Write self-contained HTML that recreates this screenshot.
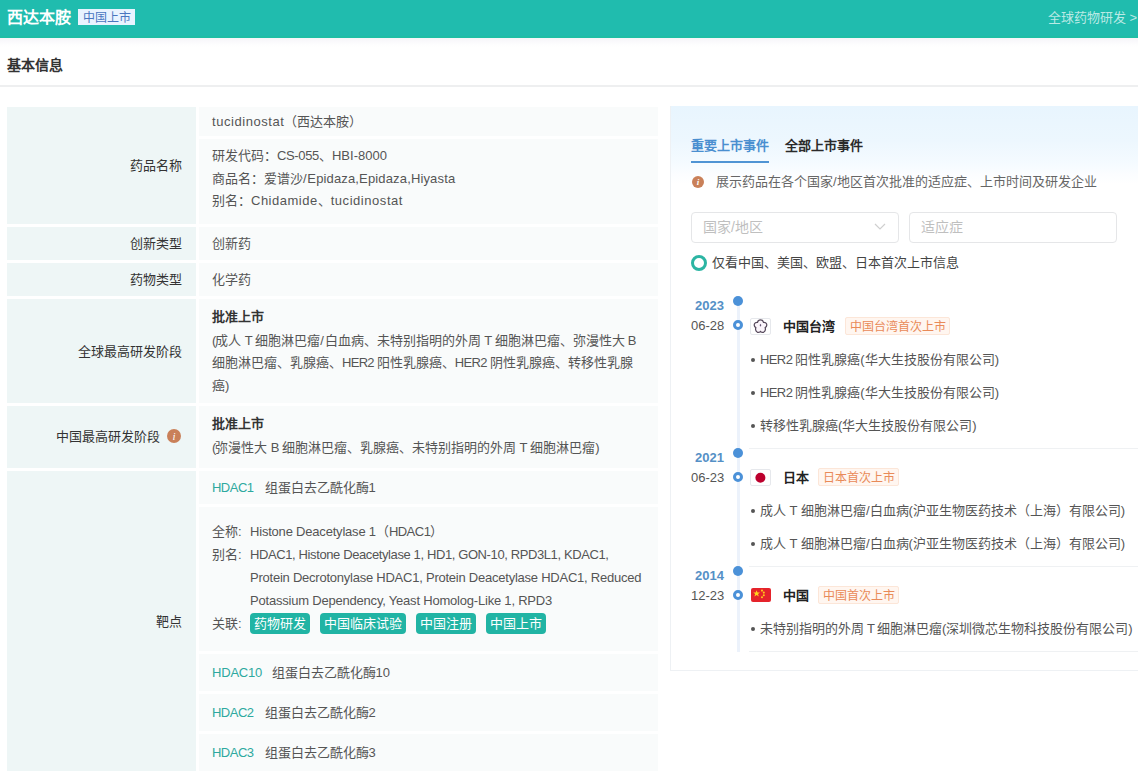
<!DOCTYPE html>
<html lang="zh-CN"><head><meta charset="utf-8">
<style>
html,body{margin:0;padding:0;}
body{width:1138px;height:771px;overflow:hidden;position:relative;background:#fff;font-family:"Liberation Sans",sans-serif;color:#555;}
.a{position:absolute;}
.t{position:absolute;white-space:nowrap;}
#hdr{left:0;top:0;width:1138px;height:38px;background:#20bcae;}
#shadow{left:0;top:38px;width:1138px;height:9px;background:linear-gradient(#f6f5f9,#fdfdfe 70%,#fff);}
.lab{position:absolute;left:7px;width:189px;background:#eef6f6;}
.val{position:absolute;left:199px;width:459px;background:#f9fbfb;}
.lt{position:absolute;right:14px;white-space:nowrap;font-size:13px;color:#333;line-height:20px;}
.vt{position:absolute;left:13px;white-space:nowrap;font-size:13px;color:#555;line-height:20px;}
.b{font-weight:bold;color:#333;}
.teal{color:#2ea99f;}
.tag{position:absolute;height:21px;line-height:21px;border-radius:4px;background:#21b4a4;color:#fff;font-size:13px;text-align:center;}
#panel{left:670px;top:106px;width:468px;height:564px;border-left:1px solid #eef1f4;border-bottom:1px solid #eef1f4;background:linear-gradient(#e8f5fe 0px,#edf7fe 35px,#f5fbff 58px,#fbfdff 68px,#fff 78px);}
.p{position:absolute;white-space:nowrap;font-size:13px;line-height:20px;}
.yr{font-weight:bold;color:#5590c6;}
.dt{color:#555;}
.dot{position:absolute;left:733px;width:10px;height:10px;border-radius:50%;background:#4b91d8;}
.ring{position:absolute;left:733px;width:4px;height:4px;border-radius:50%;border:3px solid #4b91d8;background:#fff;}
.flag{position:absolute;left:750px;width:19px;height:15px;border:1px solid #e6e8ec;border-radius:2px;background:#fff;}
.ctry{font-weight:bold;color:#222;}
.otag{position:absolute;height:16px;line-height:19px;border:1px solid #fce6d8;background:#fff6f0;color:#e98a58;font-size:12px;text-align:center;border-radius:2px;}
.li{color:#555;}
.li:before{content:"";position:absolute;left:-9px;top:8px;width:4px;height:4px;border-radius:50%;background:#555;}
.sep{position:absolute;left:749px;width:389px;height:1px;background:#eff1f3;}
</style></head><body>

<div class="a" id="hdr"></div>
<div class="a" id="shadow"></div>
<div class="a" style="left:0;top:36px;width:1138px;height:2px;background:#1ebea5;"></div>
<div class="t" style="left:7px;top:8px;font-size:16px;line-height:20px;font-weight:bold;color:#fff;">西达本胺</div>
<div class="a" style="left:78px;top:9px;width:57px;height:16px;background:#e9f3ff;"></div>
<div class="t" style="left:78px;top:10px;width:57px;text-align:center;font-size:12px;line-height:16px;color:#4a76bf;">中国上市</div>
<div class="t" style="right:1px;top:8px;font-size:13px;line-height:20px;color:rgba(255,255,255,0.7);">全球药物研发 &gt;</div>

<div class="t" style="left:7px;top:55px;font-size:14px;line-height:20px;font-weight:bold;color:#333;">基本信息</div>
<div class="a" style="left:0;top:85px;width:1138px;height:2px;background:#eeeff0;"></div>

<!-- labels -->
<div class="lab" style="top:107px;height:117px;"><div class="lt" style="top:49px;">药品名称</div></div>
<div class="lab" style="top:227px;height:33px;"><div class="lt" style="top:7px;">创新类型</div></div>
<div class="lab" style="top:263px;height:33px;"><div class="lt" style="top:7px;">药物类型</div></div>
<div class="lab" style="top:299px;height:104px;"><div class="lt" style="top:43px;">全球最高研发阶段</div></div>
<div class="lab" style="top:406px;height:62px;"><div class="lt" style="top:21px;right:36px;">中国最高研发阶段</div>
  <div class="a" style="right:15px;top:23px;width:14px;height:14px;border-radius:50%;background:#c98059;color:#fff;font-size:11px;line-height:14px;text-align:center;font-style:italic;font-family:'Liberation Serif',serif;">i</div></div>
<div class="lab" style="top:471px;height:300px;"><div class="lt" style="top:141px;">靶点</div></div>

<!-- values -->
<div class="val" style="top:107px;height:29px;"><div class="vt" style="top:5px;"><span style="letter-spacing:.55px">tucidinostat</span>（西达本胺）</div></div>
<div class="val" style="top:139px;height:85px;">
  <div class="vt" style="top:7px;">研发代码：<span style="letter-spacing:-.35px">CS-055</span>、HBI-8000</div>
  <div class="vt" style="top:30px;">商品名：爱谱沙<span style="letter-spacing:.7px">/</span><span style="letter-spacing:.15px">Epidaza,Epidaza,Hiyasta</span></div>
  <div class="vt" style="top:52px;">别名：<span style="letter-spacing:.5px">Chidamide</span>、<span style="letter-spacing:.55px">tucidinostat</span></div>
</div>
<div class="val" style="top:227px;height:33px;"><div class="vt" style="top:7px;">创新药</div></div>
<div class="val" style="top:263px;height:33px;"><div class="vt" style="top:7px;">化学药</div></div>
<div class="val" style="top:299px;height:104px;">
  <div class="vt b" style="top:8px;">批准上市</div>
  <div class="vt" style="top:32px;"><span style="letter-spacing:-1px">(</span>成人<span style="letter-spacing:-.33px"> T </span>细胞淋巴瘤<span style="letter-spacing:1px">/</span>白血病、未特别指明的外周<span style="letter-spacing:-.33px"> T </span>细胞淋巴瘤、弥漫性大<span style="letter-spacing:-.8px"> B</span></div>
  <div class="vt" style="top:54px;">细胞淋巴瘤、乳腺癌、<span style="letter-spacing:-.7px">HER2 </span>阳性乳腺癌、<span style="letter-spacing:-.7px">HER2 </span>阴性乳腺癌、转移性乳腺</div>
  <div class="vt" style="top:77px;">癌)</div>
</div>
<div class="val" style="top:406px;height:62px;">
  <div class="vt b" style="top:8px;">批准上市</div>
  <div class="vt" style="top:32px;"><span style="letter-spacing:-1px">(</span>弥漫性大<span style="letter-spacing:-.33px"> B </span>细胞淋巴瘤、乳腺癌、未特别指明的外周<span style="letter-spacing:-.33px"> T </span>细胞淋巴瘤)</div>
</div>
<div class="val" style="top:471px;height:33px;"><div class="vt teal" style="top:7px;letter-spacing:-.52px;">HDAC1</div><div class="vt" style="top:7px;left:65.5px;">组蛋白去乙酰化酶1</div></div>
<div class="val" style="top:507px;height:144px;">
  <div class="vt" style="top:15px;">全称:</div><div class="vt" style="top:15px;left:51px;"><span style="letter-spacing:-.2px">Histone Deacetylase 1</span>（<span style="letter-spacing:-.52px">HDAC1</span>）</div>
  <div class="vt" style="top:38px;">别名:</div><div class="vt" style="top:38px;left:51px;letter-spacing:-.39px;">HDAC1, Histone Deacetylase 1, HD1, GON-10, RPD3L1, KDAC1,</div>
  <div class="vt" style="top:61px;left:51px;letter-spacing:-.236px;">Protein Decrotonylase HDAC1, Protein Deacetylase HDAC1, Reduced</div>
  <div class="vt" style="top:84px;left:51px;letter-spacing:-.206px;">Potassium Dependency, Yeast Homolog-Like 1, RPD3</div>
  <div class="vt" style="top:107px;">关联:</div>
  <div class="tag" style="left:51px;top:106px;width:60px;">药物研发</div>
  <div class="tag" style="left:121px;top:106px;width:86px;">中国临床试验</div>
  <div class="tag" style="left:217px;top:106px;width:60px;">中国注册</div>
  <div class="tag" style="left:287px;top:106px;width:60px;">中国上市</div>
</div>
<div class="val" style="top:654px;height:37px;"><div class="vt teal" style="top:9px;letter-spacing:-.2px;">HDAC10</div><div class="vt" style="top:9px;left:72.5px;">组蛋白去乙酰化酶10</div></div>
<div class="val" style="top:694px;height:37px;"><div class="vt teal" style="top:9px;letter-spacing:-.52px;">HDAC2</div><div class="vt" style="top:9px;left:65.5px;">组蛋白去乙酰化酶2</div></div>
<div class="val" style="top:734px;height:37px;"><div class="vt teal" style="top:9px;letter-spacing:-.52px;">HDAC3</div><div class="vt" style="top:9px;left:65.5px;">组蛋白去乙酰化酶3</div></div>

<!-- right panel -->
<div class="a" id="panel"></div>
<div class="p" style="left:691px;top:136px;font-weight:bold;color:#4a8fd0;">重要上市事件</div>
<div class="a" style="left:691px;top:161px;width:78px;height:2px;background:#4f94d4;"></div>
<div class="p" style="left:785px;top:136px;font-weight:bold;color:#2a2a2a;">全部上市事件</div>
<div class="a" style="left:692px;top:176px;width:12px;height:12px;border-radius:50%;background:#c98059;color:#fff;font-size:9px;line-height:12px;text-align:center;font-style:italic;font-weight:bold;font-family:'Liberation Serif',serif;">i</div>
<div class="p" style="left:716px;top:172px;color:#666;">展示药品在各个国家/地区首次批准的适应症、上市时间及研发企业</div>

<div class="a" style="left:691px;top:212px;width:206px;height:29px;border:1px solid #e5e6e8;border-radius:4px;background:#fff;"></div>
<div class="p" style="left:703px;top:217px;font-size:14px;color:#bfbfbf;">国家/地区</div>
<svg class="a" style="left:874px;top:223px;" width="12" height="7" viewBox="0 0 12 7"><path d="M1 1 L6 6 L11 1" fill="none" stroke="#cfcfcf" stroke-width="1.2"/></svg>
<div class="a" style="left:909px;top:212px;width:206px;height:29px;border:1px solid #e5e6e8;border-radius:4px;background:#fff;"></div>
<div class="p" style="left:921px;top:217px;font-size:14px;color:#bfbfbf;">适应症</div>

<div class="a" style="left:691px;top:255px;width:10px;height:10px;border-radius:50%;border:3px solid #2cb5a3;background:#fff;"></div>
<div class="p" style="left:712px;top:253px;color:#444;">仅看中国、美国、欧盟、日本首次上市信息</div>

<!-- timeline -->
<div class="a" style="left:737px;top:301px;width:3px;height:351px;background:#ecf2fb;"></div>

<div class="dot" style="top:296px;"></div>
<div class="p yr" style="left:695px;top:296px;">2023</div>
<div class="ring" style="top:320px;"></div>
<div class="p dt" style="left:691px;top:316px;">06-28</div>
<div class="flag" style="top:318px;"><svg class="a" style="left:2px;top:0px;" width="15" height="15" viewBox="0 0 14 14"><path d="M7 0.9 C8.8 0.9 9.6 2.3 9.8 3.1 C10.9 2.9 12.9 3.7 12.9 5.6 C12.9 7 11.8 7.8 11.3 8.2 C11.8 9.1 11.8 11.3 10.1 12.2 C8.8 12.8 7.7 12.2 7 11.5 C6.3 12.2 5.2 12.8 3.9 12.2 C2.2 11.3 2.2 9.1 2.7 8.2 C2.2 7.8 1.1 7 1.1 5.6 C1.1 3.7 3.1 2.9 4.2 3.1 C4.4 2.3 5.2 0.9 7 0.9 Z" fill="#fbf5fb" stroke="#574a5c" stroke-width="1.15"/><path d="M6.9 4.4 L7.8 5.7 L7.1 7.3 L6.2 5.9 Z" fill="#6a5a78"/></svg></div>
<div class="p ctry" style="left:783px;top:317px;">中国台湾</div>
<div class="otag" style="left:845px;top:317px;width:103px;">中国台湾首次上市</div>
<div class="p li" style="left:760px;top:350px;"><span style="letter-spacing:-.6px">HER2 </span>阳性乳腺癌(华大生技股份有限公司)</div>
<div class="p li" style="left:760px;top:383px;"><span style="letter-spacing:-.6px">HER2 </span>阴性乳腺癌(华大生技股份有限公司)</div>
<div class="p li" style="left:760px;top:416px;">转移性乳腺癌(华大生技股份有限公司)</div>
<div class="sep" style="top:448px;"></div>

<div class="dot" style="top:448px;"></div>
<div class="p yr" style="left:695px;top:448px;">2021</div>
<div class="ring" style="top:472px;"></div>
<div class="p dt" style="left:691px;top:468px;">06-23</div>
<div class="flag" style="top:469px;"><svg class="a" style="left:0;top:0;" width="19" height="15" viewBox="0 0 19 15"><circle cx="9.4" cy="7.7" r="5" fill="#bc002d"/></svg></div>
<div class="p ctry" style="left:783px;top:468px;">日本</div>
<div class="otag" style="left:818px;top:468px;width:79px;">日本首次上市</div>
<div class="p li" style="left:760px;top:501px;">成人 T 细胞淋巴瘤/白血病(沪亚生物医药技术（上海）有限公司)</div>
<div class="p li" style="left:760px;top:534px;">成人 T 细胞淋巴瘤/白血病(沪亚生物医药技术（上海）有限公司)</div>
<div class="sep" style="top:566px;"></div>

<div class="dot" style="top:566px;"></div>
<div class="p yr" style="left:695px;top:566px;">2014</div>
<div class="ring" style="top:590px;"></div>
<div class="p dt" style="left:691px;top:586px;">12-23</div>
<svg class="a" style="left:751px;top:588px;" width="20" height="14" viewBox="0 0 20 14"><rect width="20" height="14" rx="2" fill="#e5232b"/><path d="M5.6 2.2 L6.5 4.6 L9 4.6 L7 6.1 L7.8 8.5 L5.6 7 L3.4 8.5 L4.2 6.1 L2.2 4.6 L4.7 4.6 Z" fill="#ffd51c"/><circle cx="11" cy="2.6" r="1.05" fill="#ffc61c"/><circle cx="12.8" cy="4.6" r="1.05" fill="#ffc61c"/><circle cx="12.8" cy="7.2" r="1.05" fill="#ffc61c"/><circle cx="11" cy="9.2" r="1.05" fill="#ffc61c"/></svg>
<div class="p ctry" style="left:783px;top:586px;">中国</div>
<div class="otag" style="left:818px;top:586px;width:79px;">中国首次上市</div>
<div class="p li" style="left:760px;top:619px;">未特别指明的外周<span style="letter-spacing:-.67px"> T </span>细胞淋巴瘤(深圳微芯生物科技股份有限公司)</div>
<div class="sep" style="top:651px;"></div>

</body></html>
